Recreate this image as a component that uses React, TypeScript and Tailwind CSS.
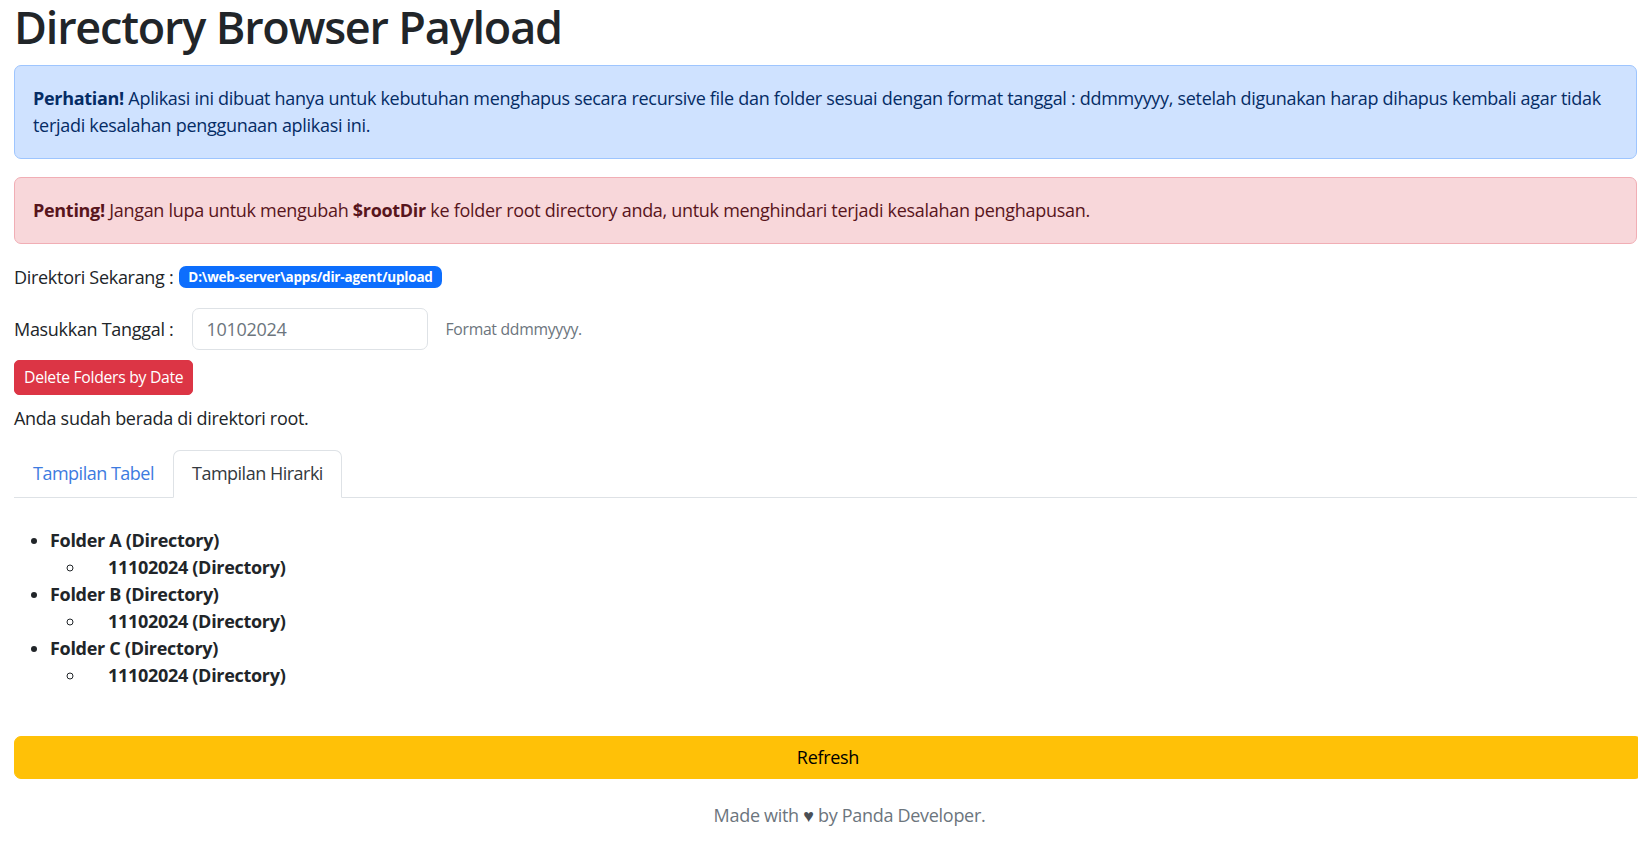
import React from 'react'

const folders = ['Folder A', 'Folder B', 'Folder C']

export default function App() {
  return (
    <div className="w-full min-h-[845px] overflow-hidden bg-white text-[#212529] font-['Open_Sans',sans-serif] text-[18px] leading-[27px] tracking-[-0.3px]">
      <div className="w-[1700px] pl-[14px]">
        <div className="w-[1623px]">
          <h1 className="text-[45px] leading-[54px] font-semibold tracking-[-1.2px] mb-[11px]">Directory Browser Payload</h1>

          <div className="border border-[#9ec5fe] bg-[#cfe2ff] text-[#052c65] rounded-[7px] px-[18px] py-[19px] mb-[18px]">
            <strong className="font-bold">Perhatian!</strong> Aplikasi ini dibuat hanya untuk kebutuhan menghapus
            secara recursive file dan folder sesuai dengan format tanggal : ddmmyyyy, setelah digunakan harap dihapus
            kembali agar tidak terjadi kesalahan penggunaan aplikasi ini.
          </div>

          <div className="border border-[#f1aeb5] bg-[#f8d7da] text-[#58151c] rounded-[7px] px-[18px] py-[19px] mb-[18px]">
            <strong className="font-bold">Penting!</strong> Jangan lupa untuk mengubah <strong className="font-bold">$rootDir</strong>{' '}
            ke folder root directory anda, untuk menghindari terjadi kesalahan penghapusan.
          </div>

          <div className="flex items-center h-[30px] mt-[18px]">
            <span>Direktori Sekarang :</span>
            <span className="ml-[6px] bg-[#0d6efd] text-white text-[13.5px] leading-[14px] font-bold tracking-[-0.2px] rounded-[7px] px-[9px] py-[4px]">
              D:\web-server\apps/dir-agent/upload
            </span>
          </div>

          <div className="flex items-center mt-[16px] gap-[18px]">
            <label>Masukkan Tanggal :</label>
            <div className="w-[236px] h-[42px] border border-[#dee2e6] rounded-[7px] px-[14px] flex items-center text-[#6c757d]">
              10102024
            </div>
            <span className="text-[15.75px] text-[#6c757d]">Format ddmmyyyy.</span>
          </div>

          <button className="mt-[10px] bg-[#dc3545] text-white text-[15.75px] leading-[23px] rounded-[5px] px-[9px] py-[5px] border border-[#dc3545]">
            Delete Folders by Date
          </button>

          <p className="mt-[10px]">Anda sudah berada di direktori root.</p>

          <div className="flex mt-[18px] border-b border-[#dee2e6] tracking-[-0.5px]">
            <div className="px-[18px] py-[9px] text-[#3d7be0] border border-transparent">Tampilan Tabel</div>
            <div className="px-[18px] py-[9px] text-[#343a40] border border-[#dee2e6] border-b-white rounded-t-[7px] -mb-px bg-white">
              Tampilan Hirarki
            </div>
          </div>

          <ul className="list-disc pl-[36px] mt-[29px] font-bold">
            {folders.map((f) => (
              <li key={f}>
                {f} (Directory)
                <ul className="list-[circle] pl-[36px]">
                  <li>
                    <span className="ml-[22px]">11102024 (Directory)</span>
                  </li>
                </ul>
              </li>
            ))}
          </ul>
        </div>

        <button className="mt-[47px] w-[1628px] h-[43px] bg-[#ffc107] text-black rounded-[7px] border border-[#ffc107]">
          Refresh
        </button>

        <p className="mt-[23px] text-center text-[#6c757d] w-[1671px]">
          Made with <span className="text-[#4a4f55]">♥</span> by Panda Developer.
        </p>
      </div>
    </div>
  )
}
